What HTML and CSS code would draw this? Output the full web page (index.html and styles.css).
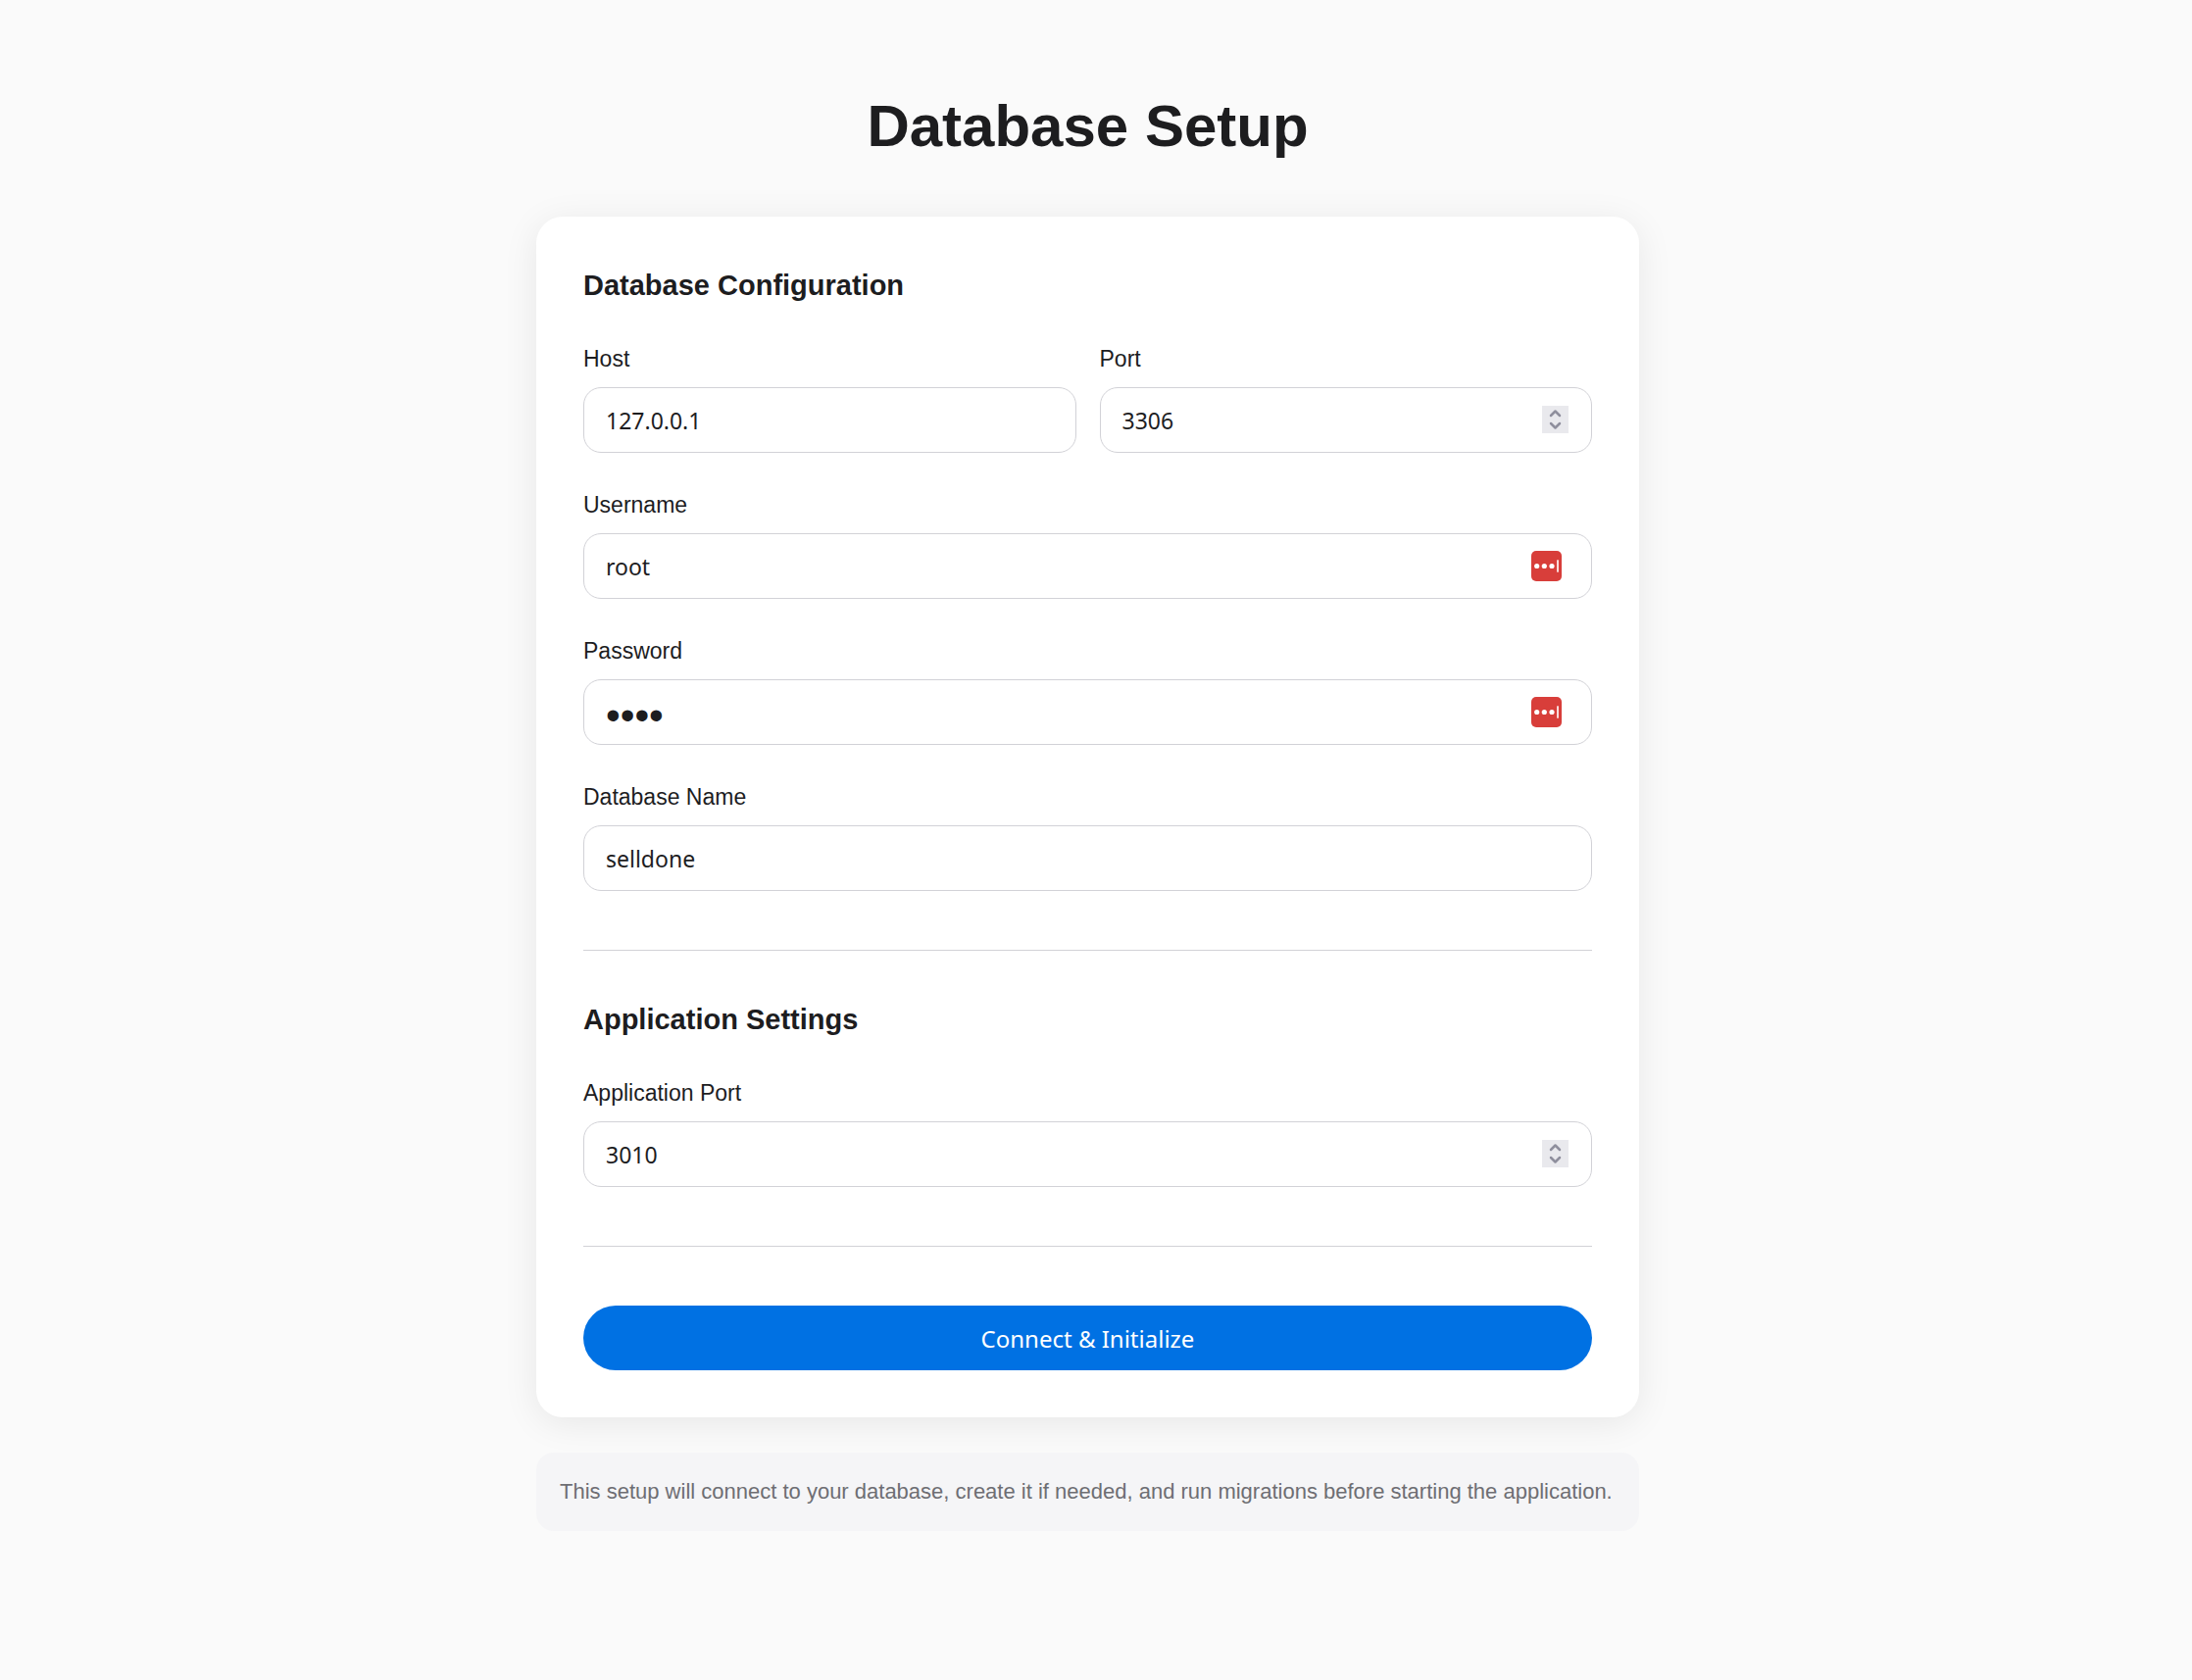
FILE: index.html
```html
<!DOCTYPE html>
<html lang="en">
<head>
<meta charset="utf-8">
<meta name="viewport" content="width=device-width, initial-scale=1">
<title>Database Setup</title>
<link rel="stylesheet" href="styles.css">
</head>
<body>
<main class="page">
  <h1 class="title">Database Setup</h1>
  <form class="card">
    <h2 class="section-title">Database Configuration</h2>
    <div class="fields">
      <div class="row">
        <div class="field">
          <label for="host">Host</label>
          <input class="input" id="host" type="text" value="127.0.0.1">
        </div>
        <div class="field">
          <label for="port">Port</label>
          <div class="control">
            <input class="input" id="port" type="number" value="3306">
            <svg class="stepper" viewBox="0 0 27 28" aria-hidden="true"><path d="M9 10l4.500-4.500 4.500 4.500M9 18l4.500 4.500 4.500-4.500"/></svg>
          </div>
        </div>
      </div>
      <div class="field">
        <label for="username">Username</label>
        <div class="control">
          <input class="input" id="username" type="text" value="root">
          <svg class="autofill" viewBox="0 0 31 31" aria-hidden="true"><rect class="autofill-bg" width="31" height="31" rx="5"/><circle cx="5.700" cy="15.500" r="2.600"/><circle cx="13.300" cy="15.500" r="2.600"/><circle cx="21" cy="15.500" r="2.600"/><rect class="autofill-bar" x="26" y="9.300" width="2" height="12.400"/></svg>
        </div>
      </div>
      <div class="field">
        <label for="password">Password</label>
        <div class="control">
          <input class="input password" id="password" type="password" value="root">
          <svg class="autofill" viewBox="0 0 31 31" aria-hidden="true"><rect class="autofill-bg" width="31" height="31" rx="5"/><circle cx="5.700" cy="15.500" r="2.600"/><circle cx="13.300" cy="15.500" r="2.600"/><circle cx="21" cy="15.500" r="2.600"/><rect class="autofill-bar" x="26" y="9.300" width="2" height="12.400"/></svg>
        </div>
      </div>
      <div class="field">
        <label for="database">Database Name</label>
        <input class="input" id="database" type="text" value="selldone">
      </div>
    </div>
    <hr class="divider">
    <h2 class="section-title">Application Settings</h2>
    <div class="fields">
      <div class="field">
        <label for="app-port">Application Port</label>
        <div class="control">
          <input class="input" id="app-port" type="number" value="3010">
          <svg class="stepper" viewBox="0 0 27 28" aria-hidden="true"><path d="M9 10l4.500-4.500 4.500 4.500M9 18l4.500 4.500 4.500-4.500"/></svg>
        </div>
      </div>
    </div>
    <hr class="divider divider-last">
    <button class="submit" type="button">Connect &amp; Initialize</button>
  </form>
  <p class="note">This setup will connect to your database, create it if needed, and run migrations before starting the application.</p>
</main>
</body>
</html>
```
FILE: styles.css
```css
*,
*::before,
*::after {
  box-sizing: border-box;
}

body {
  margin: 0;
  padding: 84px 17px 84px 0;
  background: #fafafa;
  color: #1d1d1f;
  font-family: "Liberation Sans", Arial, sans-serif;
  font-size: 23px;
  line-height: 34px;
}

.page {
  max-width: 1125px;
  margin: 0 auto;
}

.title {
  margin: 0 0 48px;
  font-size: 60px;
  line-height: 89px;
  text-align: center;
}

.card {
  padding: 48px;
  border-radius: 27px;
  background: #fff;
  box-shadow: 0 6px 36px rgba(0, 0, 0, 0.08);
}

.section-title {
  margin: 0 0 36px;
  font-size: 29px;
  line-height: 44px;
}

.fields {
  display: flex;
  flex-direction: column;
  gap: 36px;
}

.row {
  display: grid;
  grid-template-columns: 1fr 1fr;
  gap: 24px;
}

.field {
  display: flex;
  flex-direction: column;
  gap: 12px;
}

.control {
  position: relative;
  display: flex;
}

.input {
  width: 100%;
  height: 67px;
  padding: 0 22px;
  border: 1px solid #d2d2d7;
  border-radius: 18px;
  background: #fff;
  color: inherit;
  font-family: "Noto Sans", sans-serif;
  font-size: 23px;
  appearance: textfield;
}

.input::-webkit-inner-spin-button {
  appearance: none;
  margin: 0;
}

.password {
  padding-top: 6px;
  font-family: "Liberation Sans", Arial, sans-serif;
  font-size: 42px;
}

.stepper {
  position: absolute;
  top: 19px;
  right: 24px;
  width: 27px;
  height: 28px;
  background: #e9e9ed;
  fill: none;
  stroke: #8f8f9d;
  stroke-width: 2.500;
  stroke-linecap: round;
  stroke-linejoin: round;
}

.autofill {
  position: absolute;
  top: 18px;
  right: 31px;
  width: 31px;
  height: 31px;
  fill: #fff;
}

.autofill-bg {
  fill: #d83e3a;
}

.autofill-bar {
  fill: #f8d9d8;
}

.divider {
  height: 1px;
  margin: 60px 0 48px;
  border: 0;
  background: #d2d2d7;
}

.divider-last {
  margin-bottom: 60px;
}

.submit {
  display: block;
  width: 100%;
  height: 66px;
  padding: 0;
  border: 0;
  border-radius: 33px;
  background: #0071e3;
  color: #fff;
  font-family: "Noto Sans", sans-serif;
  font-size: 24px;
}

.note {
  margin: 36px 0 0;
  padding: 23px 24px;
  border-radius: 18px;
  background: #f5f5f7;
  color: #6e6e73;
  font-size: 22px;
}
```
